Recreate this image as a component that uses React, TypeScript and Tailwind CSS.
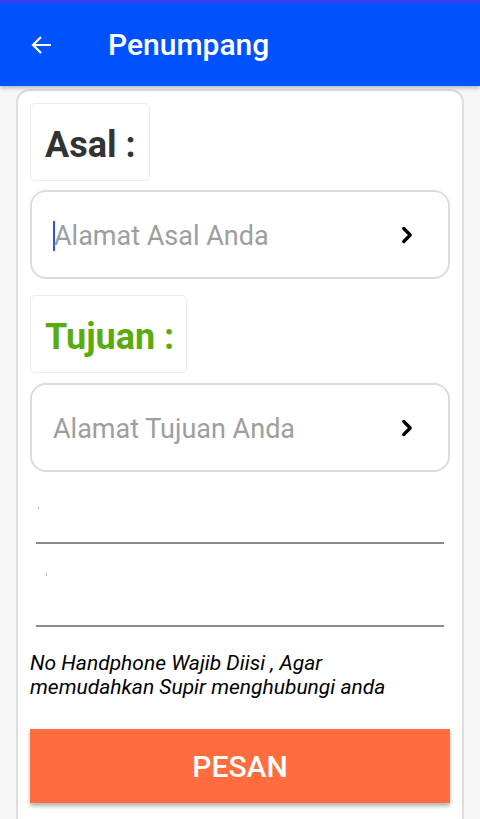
import { ChevronRight } from "lucide-react";

function LabelBox({ text, color, width }: { text: string; color: string; width: string }) {
  return (
    <div className={`${width} h-[78px] rounded-[5px] border border-[#ececec] flex items-center pl-[14px] pt-[5px]`}>
      <span className={`text-[36px] font-bold leading-none ${color}`}>{text}</span>
    </div>
  );
}

function AddressInput({ placeholder, caret }: { placeholder: string; caret?: boolean }) {
  return (
    <div className="h-[89px] rounded-[16px] border-2 border-[#dcdcdc] flex items-center pl-[21px] pr-[28px]">
      {caret && <div className="w-[2px] h-[30px] bg-[#3050f0] -mr-[1px] mt-[3px]" />}
      <span className="flex-1 text-[27px] text-[#9e9e9e] pt-[3px]">{placeholder}</span>
      <ChevronRight size={26} strokeWidth={3} className="text-black" />
    </div>
  );
}

export default function App() {
  return (
    <main
      className="h-[819px] overflow-hidden bg-[#f6f6f6]"
      style={{ fontFamily: "Roboto, 'Liberation Sans', sans-serif" }}
    >
      <header className="h-[86px] bg-[#0052ff] border-t-[3px] border-[#3b3cf2] flex items-center shadow-[0_2px_4px_rgba(0,0,0,0.25)] relative">
        <svg width="24" height="24" viewBox="0 0 24 24" className="ml-[30px]" fill="none" stroke="white" strokeWidth="2.2">
          <path d="M21 12H4M11 4l-8 8 8 8" />
        </svg>
        <h1 className="ml-[54px] text-white text-[30px] font-medium">Penumpang</h1>
      </header>

      <div className="px-4 pt-[3px]">
        <section className="bg-white border-2 border-[#dddddd] rounded-[14px] px-3 pt-3 pb-10">
          <LabelBox text="Asal :" color="text-[#333333]" width="w-[120px]" />
          <div className="mt-[9px]">
            <AddressInput placeholder="Alamat Asal Anda" caret />
          </div>

          <div className="mt-4">
            <LabelBox text="Tujuan :" color="text-[#5aab0e]" width="w-[157px]" />
          </div>
          <div className="mt-[10px]">
            <AddressInput placeholder="Alamat Tujuan Anda" />
          </div>

          <div className="mx-[6px] h-[72px] border-b-2 border-[#8a8a8a] relative">
            <div className="absolute left-[2px] top-[35px] w-[1px] h-[2px] bg-[#b0b0b0]" />
          </div>
          <div className="mx-[6px] h-[83px] border-b-2 border-[#8a8a8a] relative">
            <div className="absolute left-[10px] top-[29px] w-[1px] h-[3px] bg-[#c0c0c0]" />
          </div>

          <p className="mt-[24px] text-[21px] leading-[24px] italic text-black">
            No Handphone Wajib Diisi , Agar
            <br />
            memudahkan Supir menghubungi anda
          </p>

          <button className="mt-[30px] w-full h-[74px] bg-[#ff6d3f] text-white text-[30px] font-medium shadow-[0_3px_4px_rgba(0,0,0,0.3)]">
            PESAN
          </button>
        </section>
      </div>
    </main>
  );
}
